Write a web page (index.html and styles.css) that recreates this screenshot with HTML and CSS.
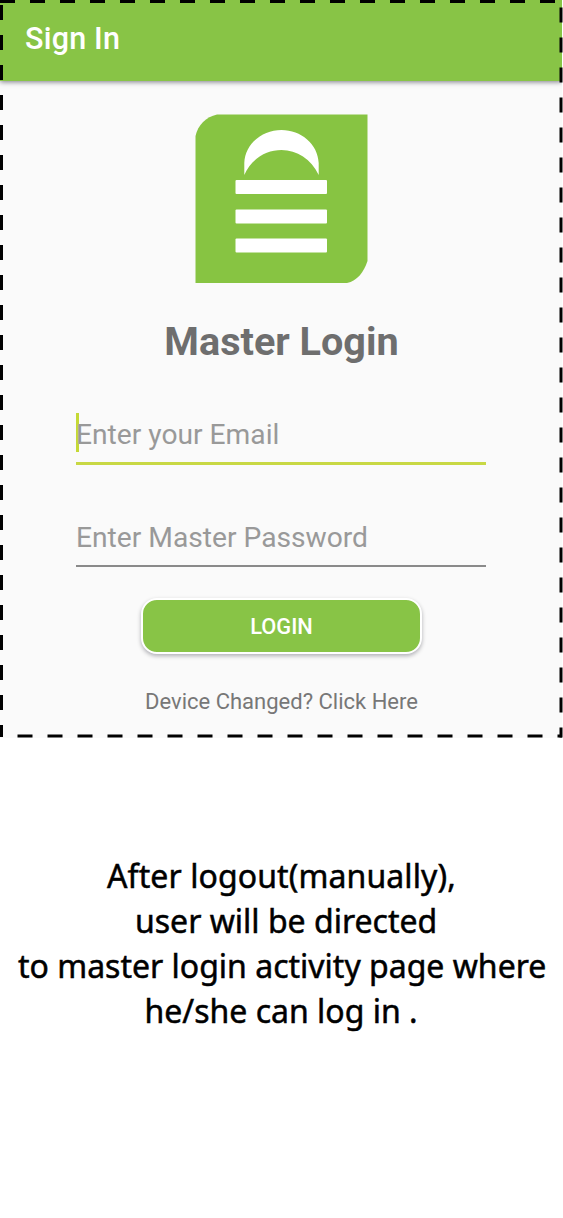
FILE: index.html
```html
<!DOCTYPE html>
<html lang="en">
<head>
<meta charset="utf-8">
<title>Sign In</title>
<link rel="stylesheet" href="styles.css">
</head>
<body>
<main class="screen">
  <header class="appbar"><h1 class="appbar-title">Sign In</h1></header>
  <section class="login">
    <svg class="logo" width="173" height="170" viewBox="0 0 173 170">
      <path fill="#87c442" d="M22 .5H172.500V147C169 158 162 167 152 169H.5V22C3 11 11 3 22 .5Z"/>
      <path fill="#fff" d="M49.300 61V49C50 30 67 16 86.500 16S123 30 123.700 49V61C116 45 102 36 86.500 36S56 45 49.300 61Z"/>
      <g fill="#fff">
        <rect x="40.500" y="66" width="91.500" height="14" rx="1"/>
        <rect x="40.500" y="95.500" width="91.500" height="14" rx="1"/>
        <rect x="40.500" y="124.500" width="91.500" height="14" rx="1"/>
      </g>
    </svg>
    <h2 class="heading">Master Login</h2>
    <div class="field field-active"><span class="caret"></span><span class="hint hint-email">Enter your Email</span></div>
    <div class="field field-password"><span class="hint hint-password">Enter Master Password</span></div>
    <button class="login-button">LOGIN</button>
    <a class="device-link">Device Changed? Click Here</a>
  </section>
  <svg class="frame" width="563" height="738" viewBox="0 0 563 738" fill="none" stroke="#000" stroke-width="3" stroke-dasharray="15">
    <path d="M0 1.500H562"/>
    <path d="M1.500 5V737"/>
    <path d="M561 7.500V737.500"/>
    <path d="M17.500 736H562"/>
  </svg>
</main>
<p class="caption">
  <span class="line line-1">After logout(manually),</span>
  <span class="line line-2">user will be directed</span>
  <span class="line line-3">to master login activity page where</span>
  <span class="line line-4">he/she can log in .</span>
</p>
</body>
</html>
```
FILE: styles.css
```css
body {
  margin: 0;
  background: #fff;
  font-family: Roboto, sans-serif;
}
.screen {
  position: relative;
  width: 562px;
  height: 738px;
  background: #fafafa;
}
.appbar {
  height: 81px;
  background: #88c446;
  box-shadow: 0 1px 5px rgba(0, 0, 20, .5);
  clip-path: inset(0 0 -10px 0);
}
.appbar-title {
  margin: 0;
  padding: 21px 0 0 25px;
  font-size: 30.5px;
  line-height: 36px;
  font-weight: 500;
  letter-spacing: .2px;
  color: #fff;
}
.login {
  display: flex;
  flex-direction: column;
  align-items: center;
  padding-top: 33px;
}
.logo { display: block; }
.heading {
  margin: 34px 0 0 1px;
  font-size: 39.600px;
  line-height: 48px;
  font-weight: 700;
  color: #6e6e6e;
}
.field {
  display: flex;
  box-sizing: border-box;
  width: 410px;
  margin-left: -1px;
  color: #999;
  font-size: 28.200px;
  line-height: 40px;
}
.hint { padding: 2px 0 0 .5px; }
.hint-password { padding-top: 3px; }
.field-active {
  height: 52px;
  margin-top: 47px;
  border-bottom: 3px solid #c8d844;
}
.caret {
  width: 3px;
  height: 39px;
  margin-right: -3px;
  background: #c5d935;
}
.field-password {
  height: 52px;
  margin-top: 50px;
  border-bottom: 2px solid #8a8a8a;
}
.login-button {
  box-sizing: border-box;
  width: 281px;
  height: 56px;
  margin: 31px 0 0 1px;
  padding: 2px 0 0;
  border: 2.500px solid #fff;
  border-radius: 16px;
  background: #88c446;
  box-shadow: 0 2px 4px rgba(0, 0, 20, .3);
  font: 500 21.800px/50px Roboto, sans-serif;
  color: #fff;
}
.device-link {
  margin: 34px 0 0 1px;
  font-size: 22px;
  line-height: 28px;
  color: #777;
}
.frame {
  position: absolute;
  top: 0;
  left: 0;
}
.caption {
  display: flex;
  flex-direction: column;
  margin: 115px 0 0;
  font-family: "Noto Sans", sans-serif;
  font-size: 32px;
  line-height: 45px;
  color: #000;
  -webkit-text-stroke: .5px #000;
  white-space: nowrap;
}
.line-1 { padding-left: 107px; letter-spacing: .1px; }
.line-2 { padding-left: 135px; }
.line-3 { padding-left: 18px; }
.line-4 { padding-left: 144.500px; }
```
